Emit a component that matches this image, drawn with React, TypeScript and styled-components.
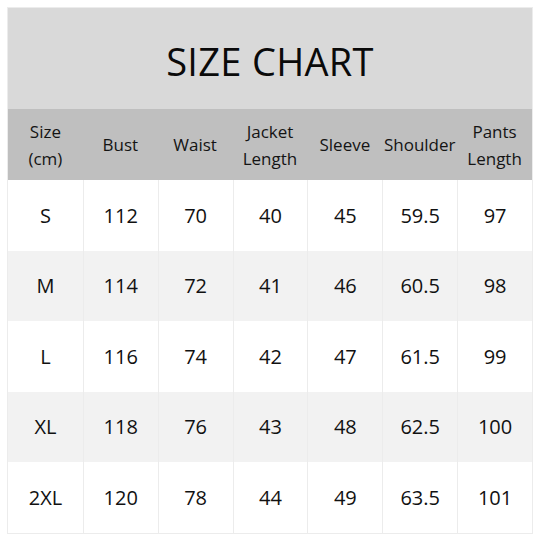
import * as React from 'react';
import styled, { createGlobalStyle } from 'styled-components';

const GlobalStyle = createGlobalStyle`
  html, body {
    margin: 0;
    padding: 0;
    background: #ffffff;
  }
  body {
    font-family: 'Open Sans', 'Liberation Sans', sans-serif;
    color: #111111;
  }
`;

const Page = styled.div`
  padding: 7px 7px 0 7px;
`;

const Chart = styled.div`
  width: 526px;
  border: 1px solid #ececec;
  box-sizing: border-box;
`;

const Title = styled.div`
  height: 101px;
  background: #d9d9d9;
  display: flex;
  align-items: center;
  justify-content: center;
  padding-top: 4px;
  box-sizing: border-box;
  font-size: 38px;
  letter-spacing: 0.3px;
  color: #0a0a0a;
`;

const Row = styled.div<{ $bg: string; $h: number }>`
  display: grid;
  grid-template-columns: repeat(7, 1fr);
  height: ${p => p.$h}px;
  background: ${p => p.$bg};
`;

const HeadCell = styled.div`
  display: flex;
  align-items: center;
  justify-content: center;
  text-align: center;
  font-size: 17px;
  line-height: 27px;
  color: #141414;
`;

const Cell = styled.div`
  display: flex;
  align-items: center;
  justify-content: center;
  font-size: 20px;
  color: #111111;
  & + & {
    border-left: 1px solid #ececec;
  }
`;

const headers = [
  ['Size', '(cm)'],
  ['Bust'],
  ['Waist'],
  ['Jacket', 'Length'],
  ['Sleeve'],
  ['Shoulder'],
  ['Pants', 'Length'],
];

const rows = [
  ['S', '112', '70', '40', '45', '59.5', '97'],
  ['M', '114', '72', '41', '46', '60.5', '98'],
  ['L', '116', '74', '42', '47', '61.5', '99'],
  ['XL', '118', '76', '43', '48', '62.5', '100'],
  ['2XL', '120', '78', '44', '49', '63.5', '101'],
];

export default function App() {
  return (
    <Page>
      <GlobalStyle />
      <Chart>
        <Title>SIZE CHART</Title>
        <Row $bg="#bfbfbf" $h={71}>
          {headers.map((h, i) => (
            <HeadCell key={i}>
              <div>
                {h.map((line, j) => (
                  <div key={j}>{line}</div>
                ))}
              </div>
            </HeadCell>
          ))}
        </Row>
        {rows.map((r, i) => (
          <Row key={r[0]} $bg={i % 2 ? '#f2f2f2' : '#ffffff'} $h={70.5}>
            {r.map((v, j) => (
              <Cell key={j}>{v}</Cell>
            ))}
          </Row>
        ))}
      </Chart>
    </Page>
  );
}
